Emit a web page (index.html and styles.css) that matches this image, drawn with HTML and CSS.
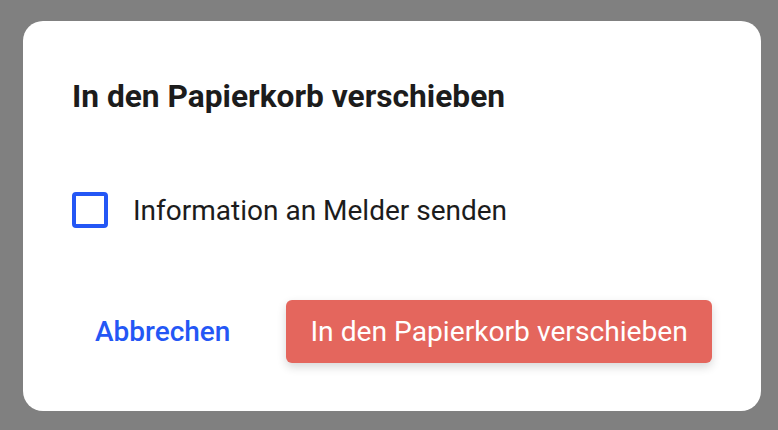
FILE: index.html
```html
<!DOCTYPE html>
<html lang="de">
<head>
<meta charset="utf-8">
<link rel="stylesheet" href="styles.css">
</head>
<body>
<div class="dialog">
  <h2 class="title">In den Papierkorb verschieben</h2>
  <label class="option">
    <span class="checkbox"></span>
    <span class="option-label">Information an Melder senden</span>
  </label>
  <div class="actions">
    <button class="btn-text">Abbrechen</button>
    <button class="btn-danger">In den Papierkorb verschieben</button>
  </div>
</div>
</body>
</html>
```
FILE: styles.css
```css
html, body {
  margin: 0;
  height: 100%;
}
body {
  background: #808080;
  padding: 21px 0 0 23px;
  box-sizing: border-box;
  font-family: Roboto, "Noto Sans", sans-serif;
}
.dialog {
  width: 738px;
  height: 390px;
  background: #fff;
  border-radius: 20px;
  box-sizing: border-box;
  padding: 60px 0 0 49px;
  display: flex;
  flex-direction: column;
}
.title {
  margin: 0;
  font-size: 31.7px;
  line-height: 32px;
  font-weight: 700;
  color: #1c1c1c;
}
.option {
  margin-top: 79px;
  display: flex;
  align-items: center;
  gap: 25px;
}
.checkbox {
  width: 36px;
  height: 36px;
  box-sizing: border-box;
  border: 4px solid #2457f5;
  border-radius: 4px;
}
.option-label {
  font-size: 28px;
  color: #1c1c1c;
}
.actions {
  margin-top: 72px;
  display: flex;
  align-items: center;
}
button {
  font-family: inherit;
  border: 0;
  cursor: pointer;
}
.btn-text {
  background: none;
  color: #2457f5;
  font-size: 28px;
  font-weight: 500;
  padding: 0 23px;
  height: 63px;
}
.btn-danger {
  margin-left: 33px;
  height: 63px;
  padding: 0 24px;
  background: #e4665d;
  color: #fff;
  font-size: 28.2px;
  border-radius: 6px;
  box-shadow: 0 4px 10px rgba(0, 0, 0, 0.16);
}
```
